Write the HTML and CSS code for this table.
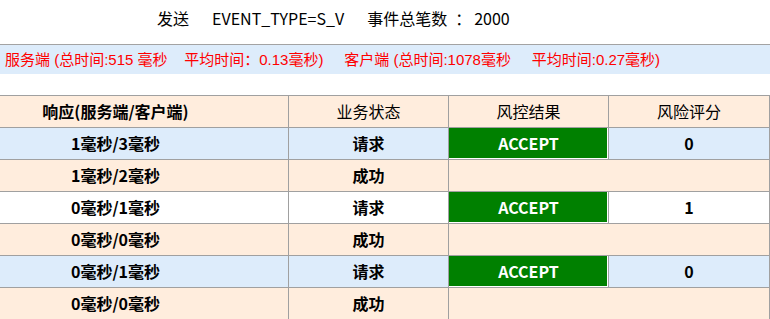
FILE: index.html
```html
<!DOCTYPE html>
<html>
<head>
<meta charset="utf-8">
<link rel="stylesheet" href="styles.css">
</head>
<body>
<div class="title">
  <span>发送</span><span class="gap">EVENT_TYPE=S_V</span><span class="gap">事件总笔数</span><span class="colon">：</span><span>2000</span>
</div>
<div class="stats">服务端 (总时间:515 毫秒&nbsp;&nbsp;&nbsp; 平均时间：0.13毫秒)&nbsp;&nbsp;&nbsp;&nbsp; 客户端 (总时间:1078毫秒&nbsp;&nbsp;&nbsp;&nbsp; 平均时间:0.27毫秒)</div>
<div class="wrap">
<table class="grid">
  <colgroup><col class="c1"><col class="c2"><col class="c3"><col class="c4"></colgroup>
  <tr class="head"><th class="strong">响应(服务端/客户端)</th><th>业务状态</th><th>风控结果</th><th>风险评分</th></tr>
  <tr class="blue"><td>1毫秒/3毫秒</td><td>请求</td><td class="accept">ACCEPT</td><td>0</td></tr>
  <tr class="peach"><td>1毫秒/2毫秒</td><td>成功</td><td colspan="2"></td></tr>
  <tr class="white"><td>0毫秒/1毫秒</td><td>请求</td><td class="accept">ACCEPT</td><td>1</td></tr>
  <tr class="peach"><td>0毫秒/0毫秒</td><td>成功</td><td colspan="2"></td></tr>
  <tr class="blue"><td>0毫秒/1毫秒</td><td>请求</td><td class="accept">ACCEPT</td><td>0</td></tr>
  <tr class="peach"><td>0毫秒/0毫秒</td><td>成功</td><td colspan="2"></td></tr>
</table>
</div>
</body>
</html>
```
FILE: styles.css
```css
html, body {
  margin: 0;
  padding: 0;
  background: #ffffff;
  overflow: hidden;
}
body {
  font-family: "Noto Sans CJK SC", "Liberation Sans", sans-serif;
  color: #000;
}
.title {
  height: 44px;
  box-sizing: border-box;
  padding: 7px 0 0 157px;
  font-size: 16px;
  line-height: 22px;
  white-space: nowrap;
}
.title .gap {
  margin-left: 23px;
}
.title .colon {
  margin-left: 8px;
  margin-right: 3px;
}
.stats {
  border-top: 1px solid #a3a3a3;
  background: #ddecfb;
  height: 29px;
  line-height: 29px;
  padding-left: 5px;
  color: #ff0000;
  font-family: "Liberation Sans", "Noto Sans CJK SC", sans-serif;
  font-size: 15px;
  white-space: nowrap;
}
.wrap {
  margin-top: 21px;
}
.grid {
  margin-left: -58px;
  border-collapse: collapse;
  table-layout: fixed;
  width: 827px;
  font-size: 16px;
  line-height: 20px;
}
.c1 { width: 346px; }
.c2 { width: 160px; }
.c3 { width: 160px; }
.c4 { width: 161px; }
.grid th, .grid td {
  border: 1px solid #a0a0a0;
  height: 32px;
  padding: 0 0 1px 0;
  text-align: center;
  vertical-align: middle;
  font-weight: bold;
  box-sizing: border-box;
}
.grid th {
  font-weight: normal;
}
.grid th.strong {
  font-weight: bold;
}
.head th { background: #ffeddd; }
.blue td { background: #ddecfb; }
.peach td { background: #ffeddd; }
.white td { background: #ffffff; }
.grid td.accept {
  background: #008000;
  color: #ffffff;
  box-shadow: inset -1px -1px 0 #ffffff;
}
```
